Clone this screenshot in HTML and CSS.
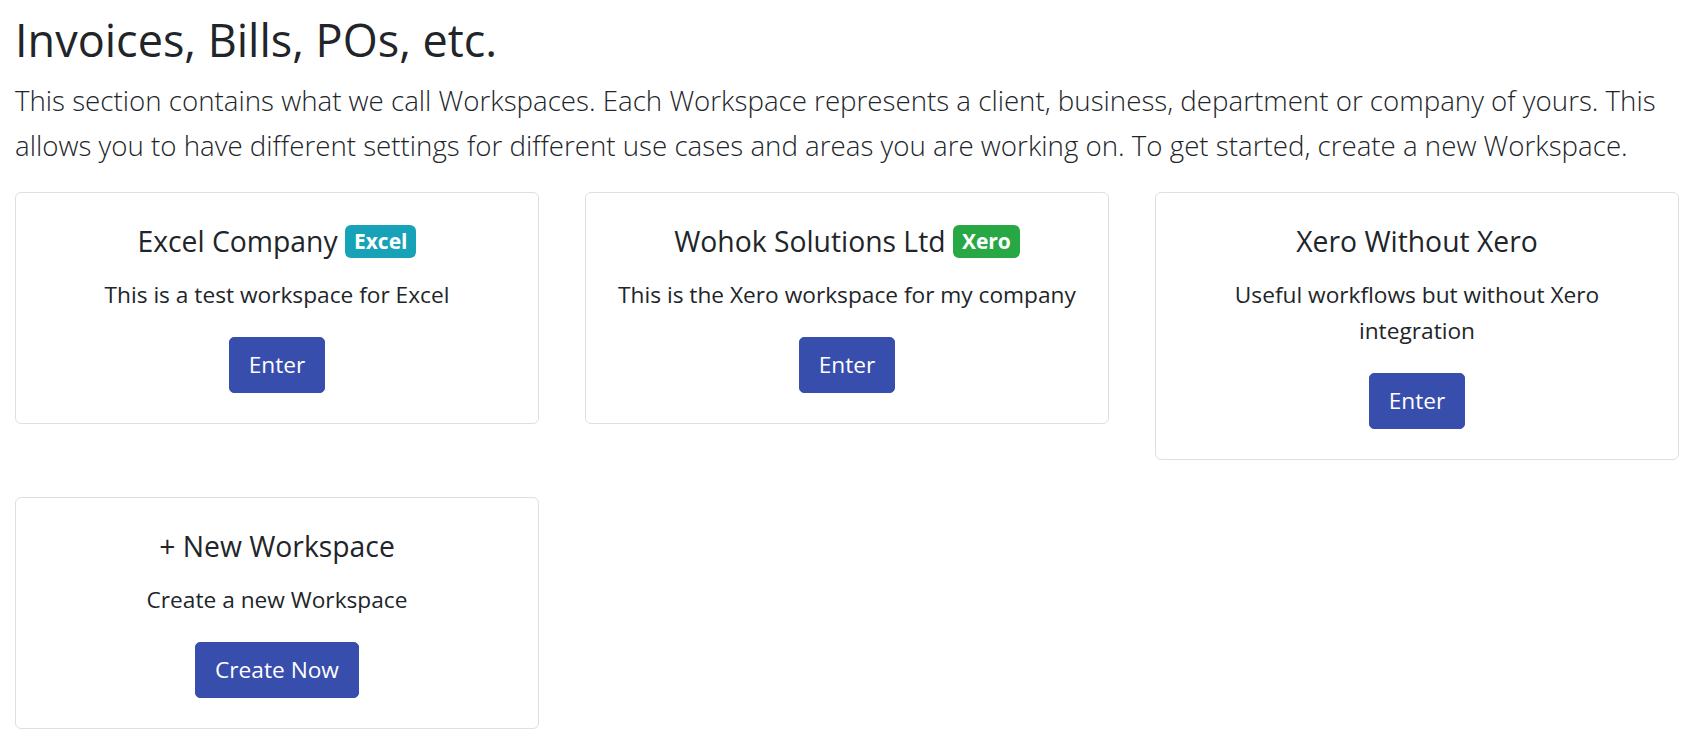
FILE: index.html
```html
<!DOCTYPE html>
<html lang="en">
<head>
  <meta charset="UTF-8" />
  <meta name="viewport" content="width=device-width, initial-scale=1" />
  <title>Invoices, Bills, POs, etc.</title>
  <link rel="stylesheet" href="styles.css">
</head>
<body>

<div class="page">
  <h2 class="page-title">Invoices, Bills, POs, etc.</h2>
  <p class="lead">This section contains what we call Workspaces. Each Workspace represents a client, business, department or company of yours. This allows you to have different settings for different use cases and areas you are working on. To get started, create a new Workspace.</p>

  <div class="workspaces">
    <div class="card">
      <h5 class="card-title">Excel Company <span class="badge badge-excel">Excel</span></h5>
      <p class="card-text">This is a test workspace for Excel</p>
      <button class="btn">Enter</button>
    </div>
    <div class="card">
      <h5 class="card-title">Wohok Solutions Ltd <span class="badge badge-xero">Xero</span></h5>
      <p class="card-text">This is the Xero workspace for my company</p>
      <button class="btn">Enter</button>
    </div>
    <div class="card">
      <h5 class="card-title">Xero Without Xero</h5>
      <p class="card-text">Useful workflows but without Xero integration</p>
      <button class="btn">Enter</button>
    </div>
    <div class="card">
      <h5 class="card-title">+ New Workspace</h5>
      <p class="card-text">Create a new Workspace</p>
      <button class="btn">Create Now</button>
    </div>
  </div>
</div>

</body>
</html>
```

FILE: styles.css
```css
body {
  font-family: 'Open Sans', sans-serif;
  margin: 0; padding: 0;
  background-color: #fff;
  color: #212529;
  font-size: 22.7px;
  line-height: 36px;
}
.page {
  padding: 11px 21px 8px 15px;
}
.page-title {
  font-size: 45px;
  font-weight: 400;
  line-height: 57.6px;
  margin: 0 0 9px;
}
.lead {
  font-size: 27.7px;
  font-weight: 300;
  line-height: 45px;
  margin: 0 0 24px;
}
.workspaces {
  display: grid;
  grid-template-columns: repeat(3, 1fr);
  column-gap: 46px;
  row-gap: 37px;
  align-items: start;
}
.card {
  border: 1px solid #dfdfdf;
  border-radius: 6px;
  padding: 30px;
  text-align: center;
}
.card-title {
  font-size: 28.3px;
  font-weight: 400;
  line-height: 36px;
  margin: 0 0 18px;
}
.card-text {
  margin: 0 0 24px;
}
.badge {
  display: inline-block;
  font-size: 21px;
  font-weight: 700;
  line-height: 1;
  padding: 6px 9px;
  border-radius: 6px;
  color: #fff;
  vertical-align: 3px;
}
.badge-excel {
  background-color: #17a2b8;
}
.badge-xero {
  background-color: #28a745;
}
.btn {
  font-family: inherit;
  font-size: 22.7px;
  line-height: 36px;
  color: #fff;
  background-color: #384eac;
  border: 1px solid #384eac;
  border-radius: 5px;
  padding: 9px 19px;
  cursor: pointer;
}
.btn:hover {
  background-color: #2e4192;
}
```
